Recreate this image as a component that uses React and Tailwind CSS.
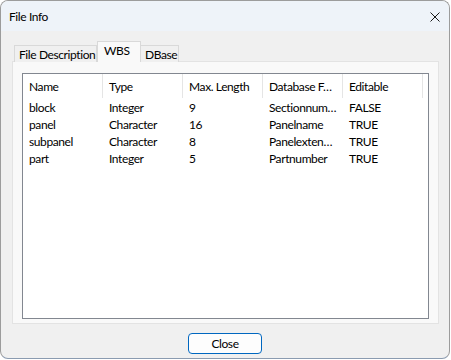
import React from "react";

const cols = ["Name", "Type", "Max. Length", "Database F…", "Editable"];
const rows = [
  ["block", "Integer", "9", "Sectionnum…", "FALSE"],
  ["panel", "Character", "16", "Panelname", "TRUE"],
  ["subpanel", "Character", "8", "Panelexten…", "TRUE"],
  ["part", "Integer", "5", "Partnumber", "TRUE"],
];

export default function App() {
  return (
    <div className="w-[451px] h-[360px] bg-white" style={{ fontFamily: '"Segoe UI", Lato, Arial, sans-serif' }}>
      <div className="w-[450px] h-[359px] border border-[#9c9c9c] border-b-[#8b9bb0] rounded-[8px] overflow-hidden flex flex-col bg-[#f0f0f0] text-[12px] text-black tracking-[-0.4px]">
        {/* title bar */}
        <div className="h-[30px] shrink-0 bg-[#eef3f9] flex items-center justify-between pl-[8px] pr-[9px]">
          <span className="text-[12px] leading-none pt-[1px]">File Info</span>
          <svg width="10" height="10" viewBox="0 0 10 10" className="mt-[1px]">
            <path d="M0.5 0.5 L9.5 9.5 M9.5 0.5 L0.5 9.5" stroke="#1a1a1a" strokeWidth="1" fill="none" />
          </svg>
        </div>
        {/* body */}
        <div className="flex-1 flex flex-col px-[11px] pt-[11px] pb-[3px]">
          {/* tabs */}
          <div className="h-[20px] flex items-end pl-[2px] -mb-px relative z-10">
            <div className="h-[17px] w-[83px] border border-b-0 border-[#d9d9d9] bg-[#f0f0f0] pl-[4px] leading-[17px] whitespace-nowrap overflow-hidden">
              File Description
            </div>
            <div className="h-[21px] w-[44px] border border-b-0 border-[#d9d9d9] bg-[#f9f9f9] pl-[6px] leading-[17px]">
              WBS
            </div>
            <div className="h-[17px] w-[38px] border border-b-0 border-l-0 border-[#d9d9d9] bg-[#f0f0f0] pl-[4px] leading-[17px]">
              DBase
            </div>
          </div>
          {/* panel */}
          <div className="h-[263px] w-[427px] border border-[#e3e3e3] bg-[#f9f9f9] pt-[11px] pl-[9px] pr-[9px] pb-[4px]">
            <div className="w-[407px] h-[246px] border border-[#828790] bg-white">
              <div className="h-[24px] flex">
                {cols.map((c) => (
                  <div key={c} className="w-[80px] h-[24px] shrink-0 border-r border-[#e5e5e5] pl-[6px] pt-[1px] flex items-center whitespace-nowrap overflow-hidden">
                    {c}
                  </div>
                ))}
              </div>
              {rows.map((r) => (
                <div key={r[0]} className="h-[17px] flex leading-[17px]">
                  {r.map((v, i) => (
                    <div key={i} className="w-[80px] shrink-0 pl-[6px] pt-[1px] whitespace-nowrap overflow-hidden">
                      {v}
                    </div>
                  ))}
                </div>
              ))}
            </div>
          </div>
          {/* button */}
          <div className="flex justify-center mt-[9px]">
            <div className="w-[74px] h-[21px] border border-[#0067c0] rounded-[4px] bg-[#fdfdfd] flex items-center justify-center">
              Close
            </div>
          </div>
        </div>
      </div>
    </div>
  );
}
